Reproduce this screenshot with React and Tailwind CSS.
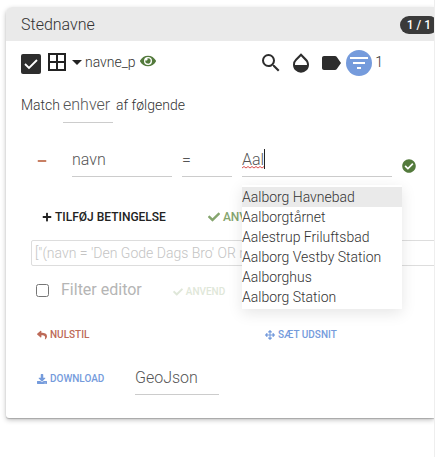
import React from "react";
import { FaCheck, FaCheckCircle, FaDownload, FaEye, FaArrowsAlt, FaMinus, FaPlus, FaReply } from "react-icons/fa";
import { MdArrowDropDown, MdBorderAll, MdFilterList, MdLabel, MdOpacity, MdSearch } from "react-icons/md";

const suggestions = [
  "Aalborg Havnebad",
  "Aalborgtårnet",
  "Aalestrup Friluftsbad",
  "Aalborg Vestby Station",
  "Aalborghus",
  "Aalborg Station",
];

function Select({ label, value, options, className }) {
  return (
    <select
      aria-label={label}
      defaultValue={value}
      className={`h-9 appearance-none border-b border-[#cccccc] bg-transparent pt-0.5 text-base font-light text-[#555] outline-none ${className}`}
    >
      {options.map((o) => (
        <option key={o}>{o}</option>
      ))}
    </select>
  );
}

function Squiggle() {
  return (
    <svg aria-hidden="true" className="absolute top-6 left-0 h-1 w-6" viewBox="0 0 24 4">
      <path
        d="M0 3 L2 1.5 L4 3 L6 1.5 L8 3 L10 1.5 L12 3 L14 1.5 L16 3 L18 1.5 L20 3 L22 1.5"
        fill="none"
        stroke="#d9534f"
        strokeWidth="1"
      />
    </svg>
  );
}

function ValueField() {
  return (
    <div className="relative w-[150px]">
      <input
        type="text"
        aria-label="Værdi"
        defaultValue="Aal"
        className="block h-9 w-full border-b border-[#cccccc] bg-transparent pt-0.5 text-base font-light text-[#555] outline-none"
      />
      <Squiggle />
      <span className="absolute top-2 left-[22px] h-5 w-px bg-[#222]" />
      <ul className="absolute top-11 left-0 z-10 w-40 bg-white py-0.5 text-sm leading-5 font-light text-[#333] shadow-[0_4px_14px_rgba(0,0,0,0.1)]">
        {suggestions.map((s, i) => (
          <li key={s} className={i === 0 ? "bg-[#eaeaea]" : ""}>
            {s}
          </li>
        ))}
      </ul>
    </div>
  );
}

export default function App() {
  return (
    <main className="overflow-hidden border-r border-[#eeeeee] bg-white pt-[7px] pb-10 pl-1.5 font-[Roboto,sans-serif] text-sm font-light text-[#333]">
      <section className="rounded-tl-md rounded-bl-[3px] bg-white shadow-[0_2px_5px_rgba(0,0,0,0.25),0_1px_1px_rgba(0,0,0,0.2)]">
        <header className="flex h-[34px] items-center justify-between rounded-tl-md bg-[#eaeaea] pt-0.5 pl-[15px]">
          <h1 className="text-base text-[#333]">Stednavne</h1>
          <span className="-mr-1 flex h-[18px] items-center rounded-full bg-[#3a3a3a] px-[7px] text-xs font-medium whitespace-nowrap text-white">
            1 / 1
          </span>
        </header>

        <div className="flex h-12 items-start justify-between pt-[9px] pl-[15px]">
          <div className="flex items-start">
            <label className="relative mt-1 block size-5">
              <input
                type="checkbox"
                defaultChecked
                aria-label="Vis lag"
                className="block size-5 appearance-none rounded-xs bg-[#2d2d2d]"
              />
              <svg aria-hidden="true" viewBox="0 0 20 20" className="absolute inset-0 size-5">
                <path d="M4 10 L8 14 L16 6" fill="none" stroke="white" strokeWidth="1.8" />
              </svg>
            </label>
            <MdBorderAll className="ml-1 size-6 text-[#222]" />
            <MdArrowDropDown className="-mx-1 size-6 text-[#222]" />
            <span className="leading-6">navne_p</span>
            <FaEye className="mt-[3px] ml-1 size-4 text-[#537a3c]" />
          </div>
          <div className="mr-[51px] flex items-start text-[#2d2d2d]">
            <MdSearch className="mt-px size-6" />
            <MdOpacity className="mt-px ml-1.5 size-6" />
            <MdLabel className="mt-px ml-1.5 size-6" />
            <button
              type="button"
              aria-label="Filter"
              className="ml-[3px] flex size-[26px] items-center justify-center rounded-full bg-[#759bdc] text-white"
            >
              <MdFilterList className="size-6" />
            </button>
            <span className="ml-[3px] leading-6">1</span>
          </div>
        </div>

        <div className="flex h-[31px] items-center pl-[15px]">
          <span className="mr-[3px]">Match</span>
          <Select label="Match" value="enhver" options={["enhver", "alle"]} className="w-[50px] pt-0" />
          <span className="ml-[3px]">af følgende</span>
        </div>

        <div className="flex items-center pt-[21px] pl-[31px]">
          <button type="button" aria-label="Fjern betingelse" className="mt-1 mr-[25px] text-[#c87f63]">
            <FaMinus className="size-2.5" />
          </button>
          <Select label="Felt" value="navn" options={["navn"]} className="mr-2.5 w-[100px]" />
          <Select label="Operator" value="=" options={["=", "<>"]} className="mr-2.5 w-[50px]" />
          <ValueField />
          <FaCheckCircle className="mt-3.5 ml-2.5 size-3.5 text-[#537a3c]" />
        </div>

        <div className="mt-[30px] flex h-5 items-center gap-[42px] pl-9 text-xs font-medium">
          <button type="button" className="flex items-center gap-[3px] text-[#222]">
            <FaPlus className="size-2.5" />
            TILFØJ BETINGELSE
          </button>
          <button type="button" className="flex items-center gap-[3px] text-[#85a56e]">
            <FaCheck className="size-3" />
            ANVEND
          </button>
        </div>

        <div className="mt-[13px] -mr-2 pl-[25px]">
          <input
            type="text"
            readOnly
            aria-label="Filterudtryk"
            value={`["(navn = 'Den Gode Dags Bro' OR navn = 'Aal')"]`}
            className="block h-[26px] w-full rounded-xs border border-[#dddddd] bg-white px-[3px] text-sm font-light text-[#c4c4c4] outline-none"
          />
        </div>

        <div className="flex h-12 items-center pl-[30px]">
          <input id="filter-editor" type="checkbox" className="size-[13px]" />
          <label htmlFor="filter-editor" className="ml-3 text-base font-normal text-[#b5b5b5]">
            Filter editor
          </label>
          <button
            type="button"
            className="mt-1 ml-[31px] flex items-center gap-[3px] text-[10px] font-medium text-[#dfe7d9]"
          >
            <FaCheck className="size-2.5" />
            ANVEND
          </button>
        </div>

        <div className="flex h-[42px] items-center pl-[31px] text-[10px] font-medium">
          <button type="button" className="flex w-[228px] items-center gap-[3px] text-[#bd6a58]">
            <FaReply className="size-2.5" />
            NULSTIL
          </button>
          <button type="button" className="flex items-center gap-[3px] text-[#759bdc]">
            <FaArrowsAlt className="size-2.5" />
            SÆT UDSNIT
          </button>
        </div>

        <div className="flex h-[62px] items-center pb-5 pl-[31px]">
          <button
            type="button"
            className="mt-1 flex w-[98px] items-center gap-[3px] text-[10px] font-medium text-[#759bdc]"
          >
            <FaDownload className="size-2.5" />
            DOWNLOAD
          </button>
          <Select label="Format" value="GeoJson" options={["GeoJson", "Excel"]} className="w-[84px]" />
        </div>
      </section>
    </main>
  );
}
